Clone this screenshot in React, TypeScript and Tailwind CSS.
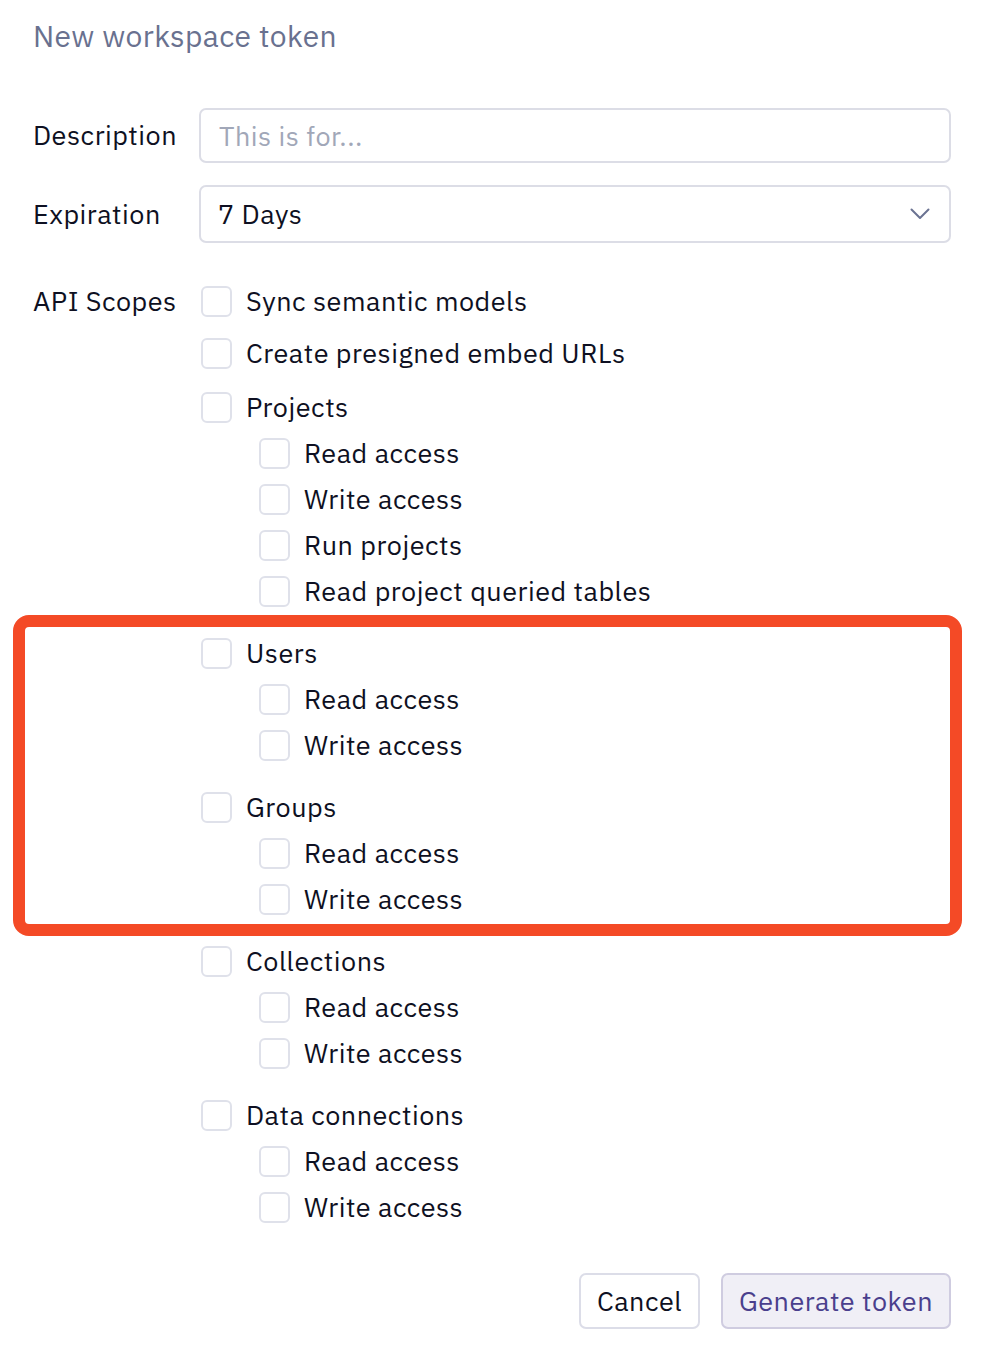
type Scope = {
  label: string;
  children?: string[];
};

const scopes: Scope[] = [
  { label: "Sync semantic models" },
  { label: "Create presigned embed URLs" },
  {
    label: "Projects",
    children: ["Read access", "Write access", "Run projects", "Read project queried tables"],
  },
  { label: "Users", children: ["Read access", "Write access"] },
  { label: "Groups", children: ["Read access", "Write access"] },
  { label: "Collections", children: ["Read access", "Write access"] },
  { label: "Data connections", children: ["Read access", "Write access"] },
];

function Check({ label }: { label: string }) {
  return (
    <label className="flex h-[30px] items-center gap-[14px]">
      <span className="block h-[31px] w-[31px] shrink-0 rounded-[6px] border-2 border-[#dfe1ea] bg-white" />
      <span className="whitespace-nowrap">{label}</span>
    </label>
  );
}

export default function App() {
  return (
    <div
      className="relative min-h-[1364px] w-[984px] bg-white px-[33px] pt-[17px] text-[27px] tracking-[0.5px] text-[#0e1022]"
      style={{ fontFamily: '"IBM Plex Sans", Inter, "Noto Sans", sans-serif' }}
    >
      <h1 className="text-[30px] font-normal leading-[38px] tracking-[0.4px] text-[#69718f]">New workspace token</h1>

      <div className="mt-[53px] grid grid-cols-[166px_1fr] items-center gap-y-[22px]">
        <div>Description</div>
        <input
          placeholder="This is for..."
          className="h-[55px] w-full rounded-[7px] border-2 border-[#dcdde6] px-[18px] text-[27px] tracking-[0.5px] outline-none placeholder:text-[#a1a7b8]"
        />
        <div>Expiration</div>
        <div className="flex h-[58px] items-center justify-between rounded-[7px] border-2 border-[#dcdde6] pl-[17px] pr-[19px]">
          <span>7 Days</span>
          <svg width="20" height="12" viewBox="0 0 20 12" fill="none" className="text-[#6b7392]">
            <path d="M1.5 1.5 10 10l8.5-8.5" stroke="currentColor" strokeWidth="2" strokeLinecap="round" strokeLinejoin="round" />
          </svg>
        </div>
      </div>

      <div className="mt-[43px] grid grid-cols-[166px_1fr] items-start">
        <div className="flex h-[30px] items-center">API Scopes</div>
        <div className="flex flex-col pl-[2px]">
          <Check label={scopes[0].label} />
          <div className="mt-[22px]">
            <Check label={scopes[1].label} />
          </div>
          {scopes.slice(2).map((scope, i) => (
            <div key={scope.label} className={i === 0 ? "mt-[24px]" : "mt-[32px]"}>
              <Check label={scope.label} />
              <div className="flex flex-col gap-[16px] pl-[58px] pt-[16px]">
                {scope.children?.map((child) => (
                  <Check key={child} label={child} />
                ))}
              </div>
            </div>
          ))}
        </div>
      </div>

      <div className="mt-[51px] flex justify-end gap-[21px]">
        <button className="h-[56px] w-[121px] rounded-[7px] border-2 border-[#dcdde8] bg-white">Cancel</button>
        <button className="h-[56px] w-[230px] rounded-[7px] border-2 border-[#cfcce0] bg-[#f0eff6] text-[#4a3f8d]">
          Generate token
        </button>
      </div>

      {/* highlight around Users and Groups */}
      <div className="pointer-events-none absolute left-[13px] top-[615px] h-[321px] w-[949px] rounded-[16px] border-[12px] border-[#f44a26]" />
    </div>
  );
}
